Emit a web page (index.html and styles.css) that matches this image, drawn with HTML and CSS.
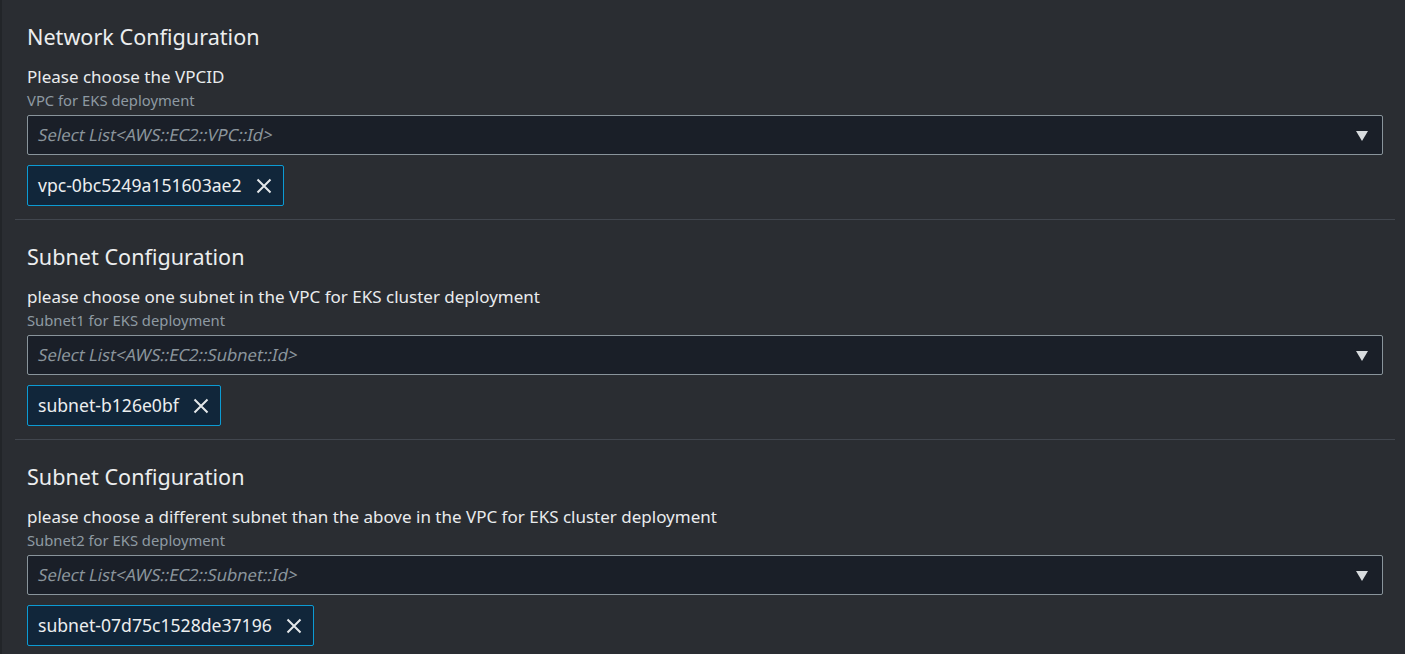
FILE: index.html
```html
<!DOCTYPE html>
<html lang="en">
<head>
<meta charset="utf-8">
<title>Stack parameters</title>
<link rel="stylesheet" href="styles.css">
</head>
<body>
<main class="panel">
  <section class="group">
    <h2 class="group-title">Network Configuration</h2>
    <div class="field-label">Please choose the VPCID</div>
    <div class="field-desc">VPC for EKS deployment</div>
    <div class="select">
      <span class="placeholder"><span class="slant">Select List&lt;AWS::EC2::VPC::Id&gt;</span></span>
      <svg class="caret" width="12" height="10" viewBox="0 0 12 10"><path d="M0 0 H12 L6 10 Z"/></svg>
    </div>
    <div class="tokens">
      <span class="token">vpc-0bc5249a151603ae2<svg class="dismiss" width="16" height="16" viewBox="0 0 16 16"><path d="M1.5 1.5 L14.5 14.5 M14.5 1.5 L1.5 14.5"/></svg></span>
    </div>
  </section>
  <section class="group">
    <h2 class="group-title">Subnet Configuration</h2>
    <div class="field-label">please choose one subnet in the VPC for EKS cluster deployment</div>
    <div class="field-desc">Subnet1 for EKS deployment</div>
    <div class="select">
      <span class="placeholder"><span class="slant">Select List&lt;AWS::EC2::Subnet::Id&gt;</span></span>
      <svg class="caret" width="12" height="10" viewBox="0 0 12 10"><path d="M0 0 H12 L6 10 Z"/></svg>
    </div>
    <div class="tokens">
      <span class="token">subnet-b126e0bf<svg class="dismiss" width="16" height="16" viewBox="0 0 16 16"><path d="M1.5 1.5 L14.5 14.5 M14.5 1.5 L1.5 14.5"/></svg></span>
    </div>
  </section>
  <section class="group">
    <h2 class="group-title">Subnet Configuration</h2>
    <div class="field-label">please choose a different subnet than the above in the VPC for EKS cluster deployment</div>
    <div class="field-desc">Subnet2 for EKS deployment</div>
    <div class="select">
      <span class="placeholder"><span class="slant">Select List&lt;AWS::EC2::Subnet::Id&gt;</span></span>
      <svg class="caret" width="12" height="10" viewBox="0 0 12 10"><path d="M0 0 H12 L6 10 Z"/></svg>
    </div>
    <div class="tokens">
      <span class="token">subnet-07d75c1528de37196<svg class="dismiss" width="16" height="16" viewBox="0 0 16 16"><path d="M1.5 1.5 L14.5 14.5 M14.5 1.5 L1.5 14.5"/></svg></span>
    </div>
  </section>
</main>
</body>
</html>
```
FILE: styles.css
```css
html, body {
  margin: 0;
  padding: 0;
  background: #2a2d32;
}
body {
  font-family: "Noto Sans", "Open Sans", sans-serif;
  color: #e9ebed;
  overflow: hidden;
}
.panel {
  border-left: 2px solid #222529;
  padding: 0 10px 0 13px;
  min-height: 654px;
  box-sizing: border-box;
}
.group {
  padding: 24px 12px 13px;
  border-bottom: 1px solid #41464e;
  display: flex;
  flex-direction: column;
}
.group-title {
  margin: 0;
  font-size: 21.6px;
  line-height: 26px;
  font-weight: 400;
  color: #eceeef;
}
.field-label {
  margin-top: 15px;
  font-size: 17px;
  line-height: 24px;
  color: #e9ebed;
}
.field-desc {
  margin-top: 1px;
  font-size: 14.8px;
  line-height: 20px;
  color: #8e9aa2;
}
.select {
  margin-top: 5px;
  height: 40px;
  box-sizing: border-box;
  border: 1px solid #89949b;
  border-radius: 2px;
  background: #1a1f28;
  display: flex;
  align-items: center;
  padding: 0 14px 0 9px;
}
.placeholder {
  flex: 1;
  font-size: 16.7px;
  line-height: 38px;
  color: #8b959c;
}
.slant {
  display: inline-block;
  transform: skewX(-12deg);
  transform-origin: 0 70%;
}
.caret {
  fill: #d8dcde;
  margin-top: 1px;
}
.tokens {
  margin-top: 10px;
  display: flex;
}
.token {
  display: inline-flex;
  align-items: center;
  gap: 14px;
  height: 41px;
  box-sizing: border-box;
  border: 1px solid #0c9bd3;
  border-radius: 2px;
  background: #11263a;
  padding: 0 11px 0 10px;
  font-size: 17.6px;
  line-height: 39px;
  color: #eceeef;
}
.dismiss {
  stroke: #e4e7e9;
  stroke-width: 2;
  fill: none;
}
```
